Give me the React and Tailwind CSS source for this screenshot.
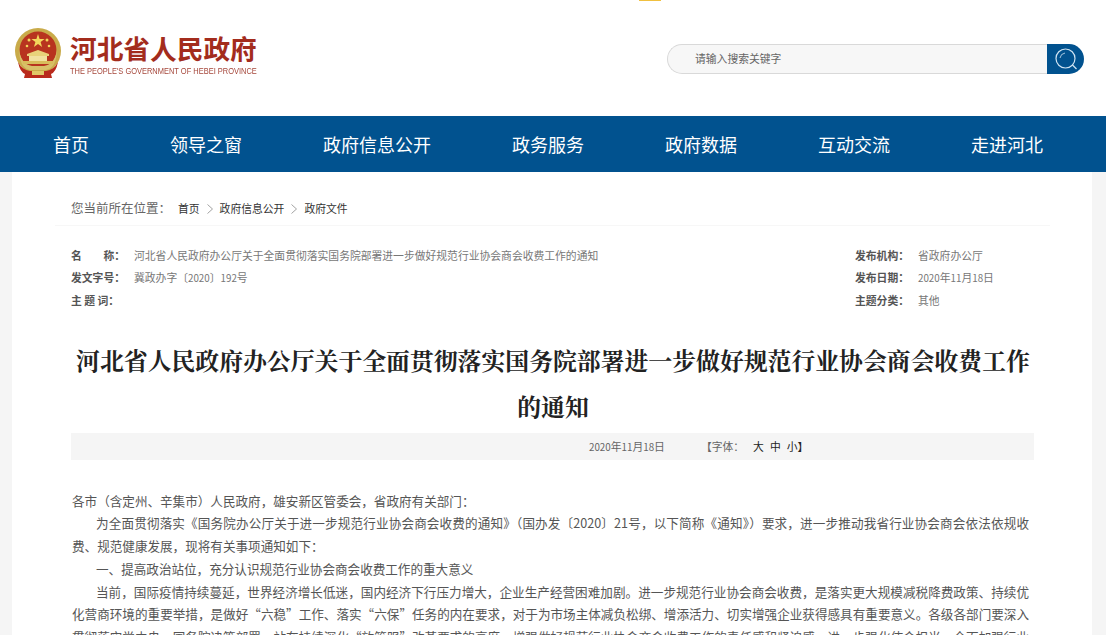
const CJK = '"Noto Sans CJK SC","Liberation Sans",sans-serif';

function Emblem() {
  return (
    <svg width="48" height="50" viewBox="0 0 48 50" className="shrink-0 blur-[0.3px]">
      <circle cx="24" cy="23" r="23" fill="#c9ab4a" />
      <circle cx="24" cy="22" r="18.5" fill="#b8341f" />
      <path d="M5 20 Q5 40 16 42 L32 42 Q43 40 43 20 Q42 36 30 38 L18 38 Q6 36 5 20Z" fill="#d8c06a" />
      <path d="M24 6 L25.6 11 L30.6 11 L26.6 14 L28.1 19 L24 16 L19.9 19 L21.4 14 L17.4 11 L22.4 11Z" fill="#f2d65c" />
      <circle cx="15" cy="12" r="1.5" fill="#f2d65c" />
      <circle cx="33" cy="12" r="1.5" fill="#f2d65c" />
      <circle cx="13" cy="18" r="1.3" fill="#f2d65c" />
      <circle cx="35" cy="18" r="1.3" fill="#f2d65c" />
      <path d="M13 26 L24 22 L35 26 L35 28 L13 28Z" fill="#e8d37a" />
      <rect x="15" y="28" width="18" height="5" fill="#f1e2a0" />
      <rect x="9" y="33" width="30" height="3" fill="#d8bd5c" />
      <path d="M4 34 Q6 44 11 46 L10 50 L38 50 L37 46 Q42 44 44 34 Q40 42 32 43 L16 43 Q8 42 4 34Z" fill="#b92a1c" />
      <rect x="18" y="43" width="12" height="4" fill="#e0c868" />
    </svg>
  );
}

function MetaRow({ label, children }) {
  return (
    <div className="flex h-[22.5px] items-center text-[10.8px] text-[#777]">
      <span className="w-[63px] shrink-0 font-bold text-[#555]">{label}</span>
      <span>{children}</span>
    </div>
  );
}

function Num({ children }) {
  return <span className="text-[9.8px]">{children}</span>;
}

function Chevron() {
  return (
    <svg width="20" height="12" viewBox="0 0 20 12" fill="none" stroke="#999" strokeWidth="0.9" className="shrink-0">
      <path d="M7.5 1.5 L12.5 6 L7.5 10.5" />
    </svg>
  );
}

const nav = ['首页', '领导之窗', '政府信息公开', '政务服务', '政府数据', '互动交流', '走进河北'];

export default function App() {
  return (
    <div lang="zh-CN" className="h-[635px] overflow-hidden bg-[#f5f5f5]" style={{ fontFamily: CJK }}>
      <header className="relative flex h-[116px] items-start justify-between bg-white pl-[14px] pr-[22px]">
        <div className="absolute left-[639px] top-0 h-px w-[22px] bg-[#f0c040]" />
        <div className="mt-[28px] flex">
          <Emblem />
          <div className="ml-[8px] flex flex-col">
            <div className="text-[26.7px] font-bold leading-[40px] text-[#a32c1d]">河北省人民政府</div>
            <div
              className="mt-[-3px] origin-left scale-x-[0.83] whitespace-nowrap text-[9px] leading-[12px] text-[#a5463a]"
              style={{ fontFamily: '"Liberation Sans",sans-serif' }}
            >
              THE PEOPLE'S GOVERNMENT OF HEBEI PROVINCE
            </div>
          </div>
        </div>
        <div className="mt-[44px] flex h-[30px] w-[417px]">
          <div className="flex flex-1 items-center rounded-l-full border border-r-0 border-[#d9d9d9] bg-[#f7f7f7] pb-[1px] pl-[27px] text-[10.8px] text-[#666]">
            请输入搜索关键字
          </div>
          <div className="flex w-[37px] items-center justify-center rounded-r-[15px] bg-[#01528f]">
            <svg width="24" height="24" viewBox="0 0 24 24" fill="none" stroke="#cfe3f2" strokeWidth="1.2">
              <circle cx="11.5" cy="11.5" r="9.5" />
              <path d="M18.5 18 L22.5 22" />
              <path d="M6 11 A6 6 0 0 1 11 6" strokeWidth="0.8" />
            </svg>
          </div>
        </div>
      </header>

      <nav className="flex h-[56px] items-center gap-[81px] bg-[#01528f] pl-[53px] text-[18px] text-white">
        {nav.map((n) => (
          <span key={n} className="whitespace-nowrap">{n}</span>
        ))}
      </nav>

      <main className="ml-[12px] mr-[14px] bg-white">
        <div className="ml-[43px] mr-[42px] flex h-[54px] items-center border-b border-[#f7f7f7] pl-[16px] pt-[20px] text-[10.8px] text-[#333]">
          <span className="mr-[7px] text-[12.5px] text-[#666]">您当前所在位置：</span>
          <span>首页</span>
          <Chevron />
          <span>政府信息公开</span>
          <Chevron />
          <span>政府文件</span>
        </div>

        <div className="mt-[17.5px] flex pl-[59px]">
          <div className="w-[784px]">
            <MetaRow label="名　　称：">河北省人民政府办公厅关于全面贯彻落实国务院部署进一步做好规范行业协会商会收费工作的通知</MetaRow>
            <MetaRow label="发文字号：">冀政办字〔<Num>2020</Num>〕<Num>192</Num>号</MetaRow>
            <MetaRow label="主 题 词："></MetaRow>
          </div>
          <div>
            <MetaRow label="发布机构：">省政府办公厅</MetaRow>
            <MetaRow label="发布日期："><Num>2020</Num>年<Num>11</Num>月<Num>18</Num>日</MetaRow>
            <MetaRow label="主题分类：">其他</MetaRow>
          </div>
        </div>

        <h1
          className="ml-[60px] mr-[58px] mt-[25.5px] mb-[4px] text-center text-[23.85px] font-bold leading-[46px] text-[#222]"
          style={{ fontFamily: '"Noto Serif CJK SC","Noto Sans CJK SC",serif' }}
        >
          河北省人民政府办公厅关于全面贯彻落实国务院部署进一步做好规范行业协会商会收费工作的通知
        </h1>

        <div className="ml-[59px] mr-[58px] flex h-[27px] items-center bg-[#f5f5f5] pl-[518px] text-[10.8px] text-[#666]">
          <span><Num>2020</Num>年<Num>11</Num>月<Num>18</Num>日</span>
          <span className="ml-[36px]">【字体：</span>
          <span className="ml-[9px] text-[#222]">大</span>
          <span className="ml-[6px] text-[#222]">中</span>
          <span className="ml-[6px] text-[#222]">小</span>
          <span className="text-[#222]">】</span>
        </div>

        <article className="ml-[60px] mr-[63px] mt-[30px] text-justify text-[12.58px] leading-[22.8px] text-[#555]">
          <p>各市（含定州、辛集市）人民政府，雄安新区管委会，省政府有关部门：</p>
          <p className="indent-[24px]">为全面贯彻落实《国务院办公厅关于进一步规范行业协会商会收费的通知》（国办发〔2020〕21号，以下简称《通知》）要求，进一步推动我省行业协会商会依法依规收费、规范健康发展，现将有关事项通知如下：</p>
          <p className="indent-[24px]">一、提高政治站位，充分认识规范行业协会商会收费工作的重大意义</p>
          <p className="indent-[24px]">当前，国际疫情持续蔓延，世界经济增长低迷，国内经济下行压力增大，企业生产经营困难加剧。进一步规范行业协会商会收费，是落实更大规模减税降费政策、持续优化营商环境的重要举措，是做好“六稳”工作、落实“六保”任务的内在要求，对于为市场主体减负松绑、增添活力、切实增强企业获得感具有重要意义。各级各部门要深入贯彻落实党中央、国务院决策部署，站在持续深化“放管服”改革要求的高度，增强做好规范行业协会商会收费工作的责任感和紧迫感，进一步强化使命担当，全面加强行业协会商会收费管理。</p>
        </article>
      </main>
    </div>
  );
}
